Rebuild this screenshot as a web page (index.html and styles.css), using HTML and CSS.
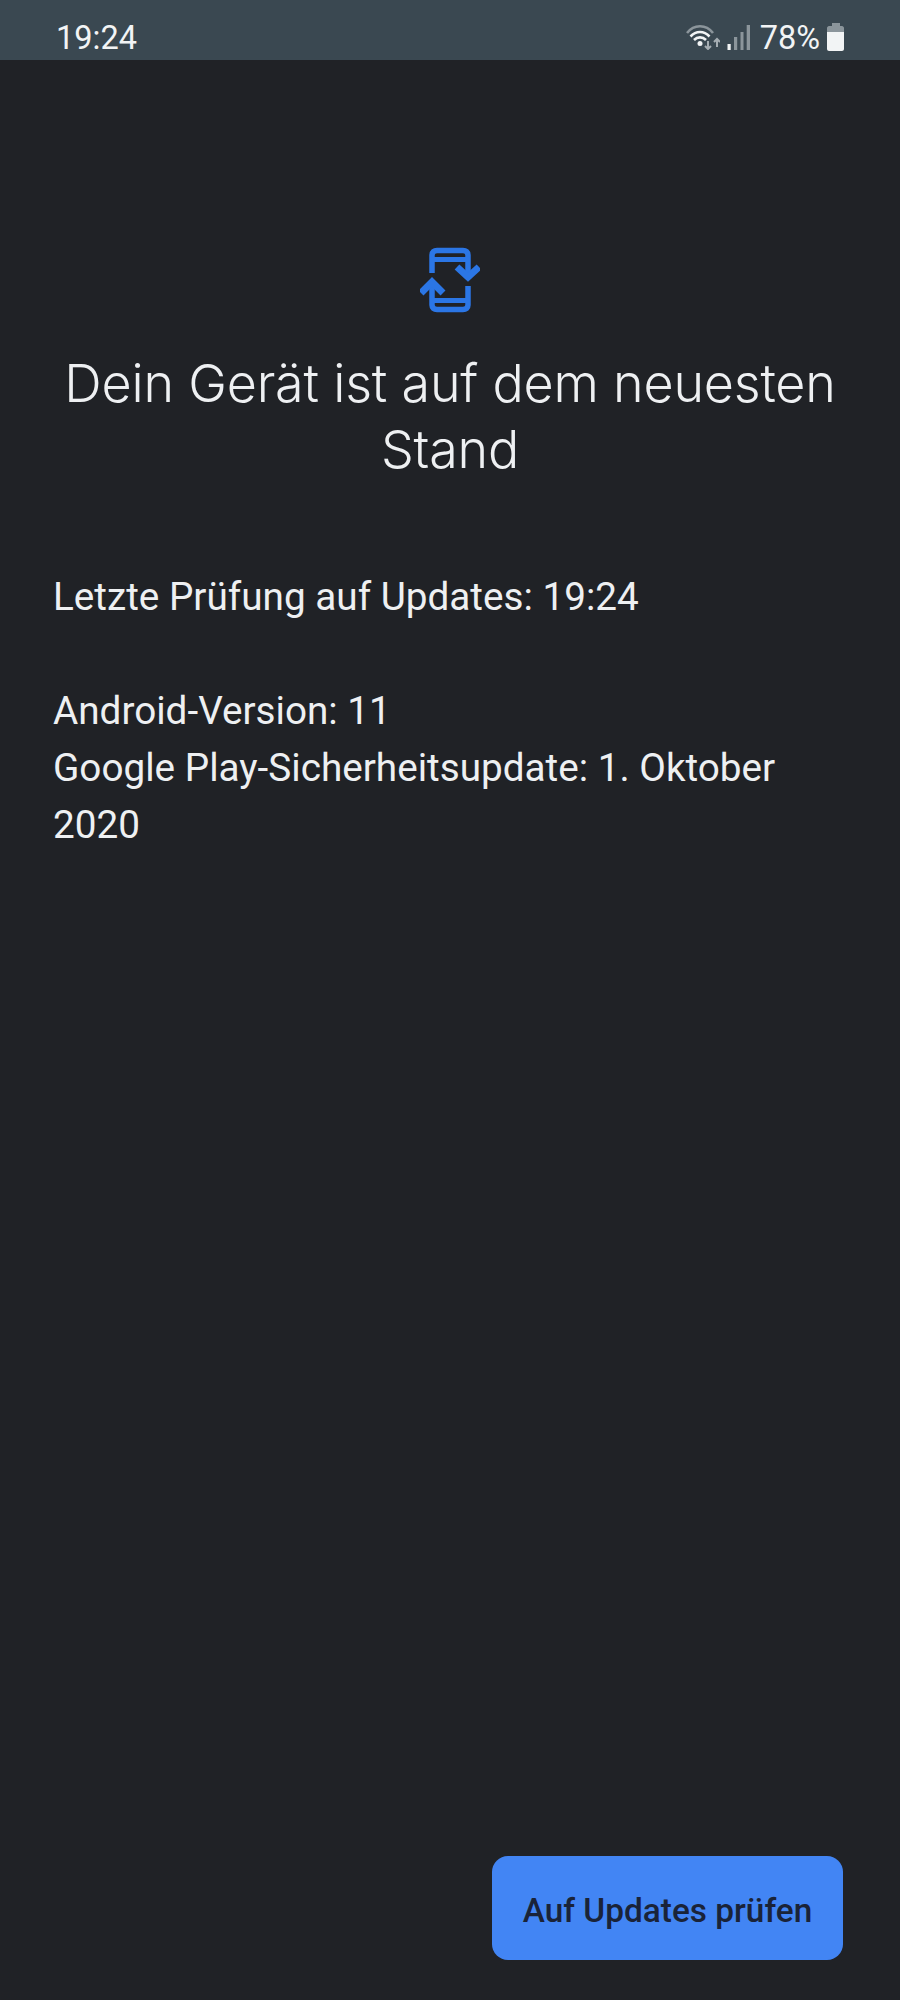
FILE: index.html
```html
<!DOCTYPE html>
<html lang="de">
<head>
    <meta charset="UTF-8">
    <title>Systemupdate</title>
    <link rel="stylesheet" href="styles.css">
</head>
<body>
    <div class="status-bar">
        <span class="clock">19:24</span>
        <div class="status-icons">
            <svg class="wifi" width="34" height="26" viewBox="0 0 34 26" fill="none">
                <path d="M1 9C8 0 20 0 27 9" stroke="#8b959b" stroke-width="2.600"/>
                <path d="M4.500 12.500C10 6.500 18 6.500 23.500 12.500" stroke="#f2f4f5" stroke-width="2.600"/>
                <path d="M8 16C11.500 12.500 16.500 12.500 20 16" stroke="#f2f4f5" stroke-width="2.600"/>
                <circle cx="14" cy="19.500" r="2.500" fill="#f2f4f5"/>
                <path d="M22 17V25M19 22L22 25L25 22" stroke="#a5adb2" stroke-width="2"/>
                <path d="M31 23V15M28 18L31 15L34 18" stroke="#a5adb2" stroke-width="2"/>
            </svg>
            <svg class="signal" width="23" height="25" viewBox="0 0 23 25">
                <rect x="0.500" y="19" width="3.200" height="6" fill="#f2f4f5"/>
                <rect x="7" y="12" width="3.200" height="13" fill="#8b959b"/>
                <rect x="13.500" y="7" width="3" height="18" fill="#8b959b"/>
                <rect x="19.700" y="0" width="3.300" height="25" fill="#8b959b"/>
            </svg>
            <span class="battery-text">78%</span>
            <svg class="battery" width="17" height="28" viewBox="0 0 17 28">
                <path d="M5 0H13V3H15C16 3 17 4 17 5V9H0V5C0 4 1 3 2 3H5Z" fill="#8b959b"/>
                <path d="M0 9H17V26C17 27 16 28 15 28H2C1 28 0 27 0 26Z" fill="#f2f4f5"/>
            </svg>
        </div>
    </div>

    <main class="content">
        <svg class="update-icon" width="60" height="68" viewBox="0 0 60 68" fill="none" stroke="#2b76e5" stroke-width="5.500">
            <path d="M12 27V9C12 6 14 4.500 17 4.500H43C46 4.500 48 6 48 9V30"/>
            <path d="M48 40V59C48 62 46 63.500 43 63.500H17C14 63.500 12 62 12 59V36"/>
            <path d="M12 13.500H48M12 54.500H48" stroke-width="5"/>
            <path d="M37 21L48 31L59 21" stroke-width="7"/>
            <path d="M1 47L12 36L23 47" stroke-width="7"/>
        </svg>
        <h1 class="title">Dein Gerät ist auf dem neuesten Stand</h1>

        <p class="last-check">Letzte Prüfung auf Updates: 19:24</p>
        <p class="version-info">Android-Version: 11<br>Google Play-Sicherheitsupdate: 1. Oktober 2020</p>
    </main>

    <div class="actions">
        <button class="check-button" type="button">Auf Updates prüfen</button>
    </div>
</body>
</html>
```

FILE: styles.css
```css
html, body {
    height: 2000px;
}
body {
    margin: 0;
    background-color: #202226;
    color: #eef0f2;
    font-family: Roboto, sans-serif;
    display: flex;
    flex-direction: column;
    overflow: hidden;
}
.status-bar {
    height: 60px;
    box-sizing: border-box;
    flex-shrink: 0;
    background-color: #3a4851;
    display: flex;
    align-items: center;
    justify-content: space-between;
    padding: 14px 56px 0 56px;
    color: #f2f4f5;
    font-size: 32.500px;
}
.status-icons {
    display: flex;
    align-items: center;
    gap: 7px;
}
.clock, .battery-text {
    padding-top: 2px;
}
.battery-text {
    font-size: 32.500px;
    margin-left: 3px;
}
.content {
    flex: 1;
    padding: 186px 53px 0;
}
.update-icon {
    display: block;
    margin: 0 auto 37px;
}
.title {
    margin: 0 0 85px;
    font-family: Inter, sans-serif;
    font-size: 52px;
    font-weight: 350;
    line-height: 66px;
    letter-spacing: -0.200px;
    text-align: center;
}
.last-check, .version-info {
    margin: 0;
    font-size: 38.700px;
    line-height: 57px;
}
.last-check {
    margin-bottom: 57px;
}
.actions {
    display: flex;
    justify-content: flex-end;
    padding: 0 57px 40px 0;
}
.check-button {
    width: 351px;
    height: 104px;
    padding: 4px 0 0;
    border: none;
    border-radius: 16px;
    background-color: #4285f4;
    color: #1a2338;
    font-family: Roboto, sans-serif;
    font-size: 33.400px;
    font-weight: 500;
}
```
